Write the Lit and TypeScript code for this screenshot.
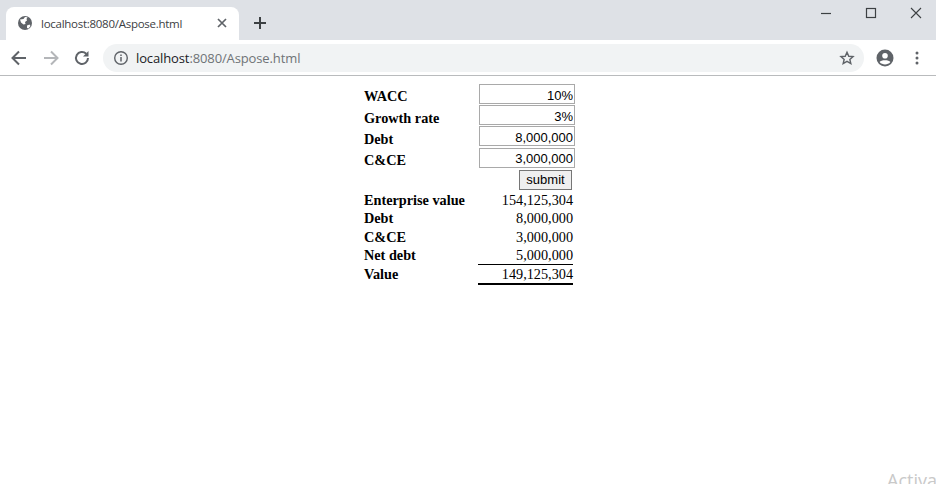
import { LitElement, html, css } from "lit";
import { customElement } from "lit/decorators.js";

const sheetInputs = [
  ["WACC", "10%"],
  ["Growth rate", "3%"],
  ["Debt", "8,000,000"],
  ["C&CE", "3,000,000"],
];
const results = [
  ["Enterprise value", "154,125,304", ""],
  ["Debt", "8,000,000", ""],
  ["C&CE", "3,000,000", ""],
  ["Net debt", "5,000,000", "under"],
  ["Value", "149,125,304", "total"],
];

@customElement("app-root")
export class AppRoot extends LitElement {
  static styles = css`
    :host { display: block; width: 936px; height: 484px; overflow: hidden; position: relative; background: #fff; font-family: "Liberation Sans", Arial, sans-serif; }
    .strip { height: 40px; background: #dee1e6; display: flex; align-items: flex-end; padding-left: 6px; position: relative; box-sizing: border-box; }
    .tab { width: 233px; height: 33px; background: #fff; border-radius: 8px 8px 0 0; display: flex; align-items: center; box-sizing: border-box; padding: 0 9px 1px 11px; color: #3c4043; font-size: 11.5px; font-family: "Open Sans", sans-serif; }
    .tab .title { margin-left: 8px; flex: 1; letter-spacing: -0.27px; }
    .plus { margin-left: 13px; margin-bottom: 9px; display: flex; }
    .win { position: absolute; top: 0; right: -2px; display: flex; }
    .win span { width: 45px; height: 26px; display: flex; align-items: center; justify-content: center; }
    .bar { background: #fff; display: flex; align-items: center; box-sizing: border-box; padding-left: 9px; border-bottom: 1px solid #b9bbbd; height: 36px; }
    .nav { width: 31.5px; display: flex; align-items: center; justify-content: flex-start; }
    .nav.reload { width: 31px; }
    .omni { width: 761px; height: 28px; background: #f1f3f4; border-radius: 14px; display: flex; align-items: center; box-sizing: border-box; padding: 0 9px 0 10px; font-size: 13px; letter-spacing: -0.12px; font-family: "Open Sans", sans-serif; color: #6f7377; }
    .omni b { font-weight: 400; color: #202124; }
    .omni .url { margin-left: 7px; flex: 1; }
    .right { display: flex; align-items: center; margin-left: 12px; gap: 21px; }
    .page { display: flex; justify-content: flex-start; padding: 8px 0 0 363px; font-family: "Liberation Serif", serif; font-size: 14.25px; color: #000; }
    .sheet { display: grid; grid-template-columns: 115px 97px; }
    .lab { font-weight: 700; padding-left: 1px; }
    .lab.in { height: 21.2px; display: flex; align-items: center; padding-top: 4.6px; box-sizing: border-box; }
    .cell { display: flex; justify-content: flex-end; }
    input { width: 96px; height: 20px; margin: 0 0 1.2px 1px; box-sizing: border-box; border: 1px solid #a9a9a9; text-align: right; font: 13px "Liberation Sans", Arial, sans-serif; padding: 2px 1px 0 2px; color: #000; background: #fff; outline: none; }
    button { width: 53px; height: 20px; margin: 1px 3px 0 0; box-sizing: border-box; padding: 0; font: 13px "Liberation Sans", Arial, sans-serif; background: #efefef; border: 1px solid #767676; border-radius: 0; color: #000; }
    .lab.res, .val { height: 18.5px; line-height: 20px; }
    .val { text-align: right; margin-right: 2px; }
    .val.under { border-bottom: 1px solid #000; }
    .val.total { border-bottom: 2px solid #000; height: 18px; }
    .lab.total, .val.total { line-height: 18px; }
    .wm { position: absolute; left: 887px; top: 468px; font: 18px "Open Sans", sans-serif; color: #c9c9c9; white-space: nowrap; }
  `;

  render() {
    return html`
      <div class="strip">
        <div class="tab">
          <svg width="16" height="16" viewBox="0 0 16 16"><circle cx="8" cy="8" r="7" fill="#5f6368"/><path fill="#fff" d="M3 4.500 6.500 4 8 2 10.500 2.200 9.500 4 10 5.500 8 7 8.500 9 6.500 9.500 4 7.500ZM10 10.500 12.500 9.500 13.500 11 11.500 13.500 10 13Z"/></svg>
          <span class="title">localhost:8080/Aspose.html</span>
          <svg width="16" height="16" viewBox="0 0 16 16"><path d="M4 4 12 12M12 4 4 12" stroke="#5f6368" stroke-width="1.700" fill="none"/></svg>
        </div>
        <span class="plus"><svg width="16" height="16" viewBox="0 0 16 16"><path d="M8 2V14M2 8H14" stroke="#3c4043" stroke-width="2" fill="none"/></svg></span>
        <div class="win">
          <span><svg width="12" height="12" viewBox="0 0 12 12"><path d="M1 6.500H11" stroke="#3c4043" stroke-width="1.200"/></svg></span>
          <span><svg width="12" height="12" viewBox="0 0 12 12"><rect x="1.500" y="1.500" width="9" height="9" fill="none" stroke="#3c4043" stroke-width="1.200"/></svg></span>
          <span><svg width="12" height="12" viewBox="0 0 12 12"><path d="M1 1 11 11M11 1 1 11" stroke="#3c4043" stroke-width="1.100"/></svg></span>
        </div>
      </div>
      <div class="bar">
        <span class="nav"><svg width="20" height="20" viewBox="0 0 20 20"><path d="M17 10H4M10 3.500 3.500 10 10 16.500" stroke="#5f6368" stroke-width="2" fill="none"/></svg></span>
        <span class="nav"><svg width="20" height="20" viewBox="0 0 20 20"><path d="M3 10H16M10 3.500 16.500 10 10 16.500" stroke="#b4b6b9" stroke-width="2" fill="none"/></svg></span>
        <span class="nav reload"><svg width="20" height="20" viewBox="0 0 20 20"><path d="M16 10a6 6 0 1 1-1.800-4.300" stroke="#5f6368" stroke-width="2" fill="none"/><path d="M16.500 3V8.500H11Z" fill="#5f6368"/></svg></span>
        <div class="omni">
          <svg width="16" height="16" viewBox="0 0 16 16"><circle cx="8" cy="8" r="6.300" fill="none" stroke="#5f6368" stroke-width="1.400"/><path d="M8 7V11.500M8 4.500V6" stroke="#5f6368" stroke-width="1.500"/></svg>
          <span class="url"><b>localhost</b>:8080/Aspose.html</span>
          <svg width="16" height="16" viewBox="0 0 18 18"><path d="M9 2.500 11 7 15.800 7.400 12.200 10.600 13.300 15.300 9 12.800 4.700 15.300 5.800 10.600 2.200 7.400 7 7Z" fill="none" stroke="#5f6368" stroke-width="1.600"/></svg>
        </div>
        <div class="right">
          <svg width="18" height="18" viewBox="0 0 18 18"><circle cx="9" cy="9" r="8.500" fill="#5f6368"/><circle cx="9" cy="6.800" r="2.800" fill="#fff"/><path d="M3.600 13C5 10.800 13 10.800 14.400 13 13 14.800 11 15.400 9 15.400S5 14.800 3.600 13Z" fill="#fff"/></svg>
          <svg width="4" height="14" viewBox="0 0 4 14"><circle cx="2" cy="2" r="1.500" fill="#5f6368"/><circle cx="2" cy="7" r="1.500" fill="#5f6368"/><circle cx="2" cy="12" r="1.500" fill="#5f6368"/></svg>
        </div>
      </div>
      <div class="page">
        <div class="sheet">
          ${sheetInputs.map(([l, v]) => html`
            <div class="lab in">${l}</div>
            <div class="cell"><input .value=${v} /></div>`)}
          <div></div>
          <div class="cell"><button>submit</button></div>
          ${results.map(([l, v, c]) => html`
            <div class="lab res ${c}">${l}</div>
            <div class="val ${c}">${v}</div>`)}
        </div>
      </div>
      <div class="wm">Activate Windows</div>
    `;
  }
}
